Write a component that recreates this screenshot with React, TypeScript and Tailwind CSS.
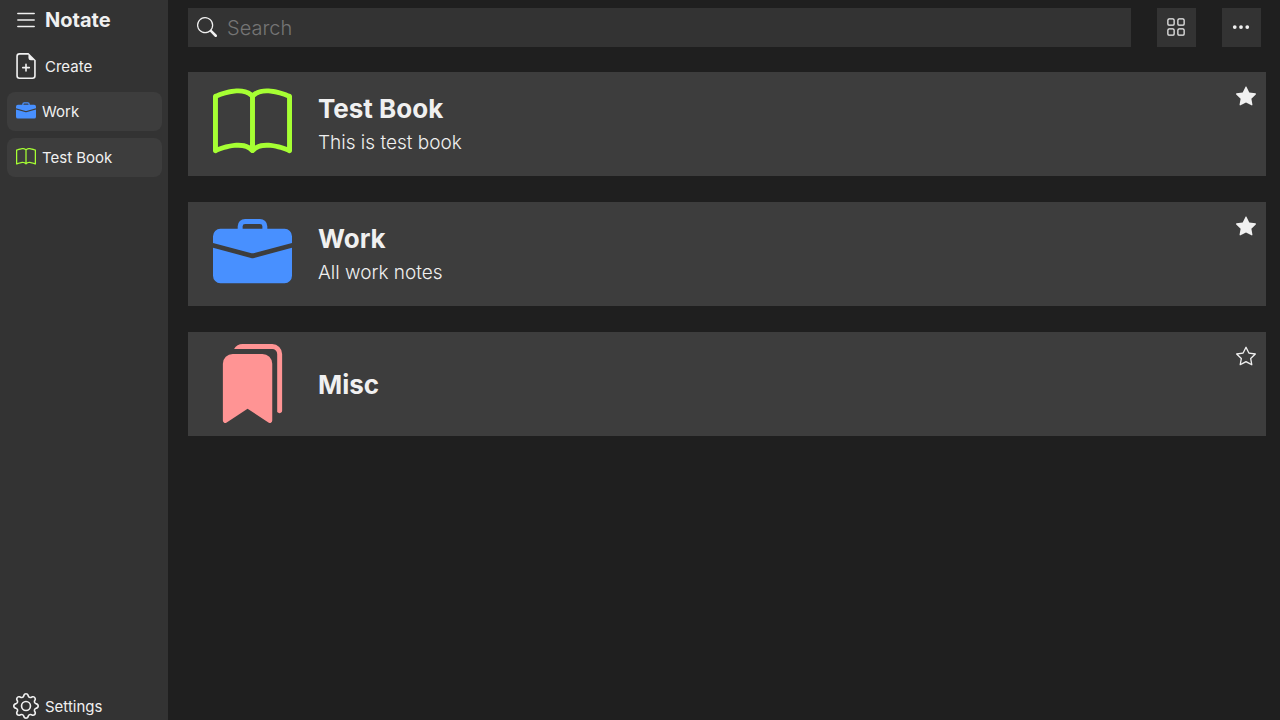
import { useState } from "react";
import type { IconType } from "react-icons";
import {
  BsBook,
  BsBookmarksFill,
  BsBriefcaseFill,
  BsFileEarmarkPlus,
  BsGear,
  BsGrid,
  BsList,
  BsSearch,
  BsStar,
  BsStarFill,
  BsThreeDots,
} from "react-icons/bs";

type Notebook = {
  id: string;
  title: string;
  description?: string;
  icon: IconType;
  color: string;
  starred: boolean;
};

const initialBooks: Notebook[] = [
  { id: "test", title: "Test Book", description: "This is test book", icon: BsBook, color: "text-[#a6ff33]", starred: true },
  { id: "work", title: "Work", description: "All work notes", icon: BsBriefcaseFill, color: "text-[#4890ff]", starred: true },
  { id: "misc", title: "Misc", icon: BsBookmarksFill, color: "text-[#ff9494]", starred: false },
];

function Sidebar({ books }: { books: Notebook[] }) {
  const pinned = books.filter((b) => b.starred).reverse();
  return (
    <aside className="flex w-[168px] shrink-0 flex-col bg-[#333333] text-[15px]">
      <div className="flex h-10 items-center gap-1.5 pl-[13px]">
        <button type="button" aria-label="Toggle menu">
          <BsList className="size-[26px]" />
        </button>
        <h1 className="text-xl font-bold">Notate</h1>
      </div>
      <button type="button" className="flex h-[52px] items-center gap-1.5 pl-[13px]">
        <BsFileEarmarkPlus className="size-[26px]" />
        <span className="pt-0.5">Create</span>
      </button>
      <nav className="flex flex-col gap-[7px] pr-1.5 pl-[7px]">
        {pinned.map(({ id, title, icon: Icon, color }) => (
          <a key={id} href={`#${id}`} className="flex h-[39px] items-center gap-1.5 rounded-lg bg-[#3d3d3d] pl-[9px]">
            <Icon className={`mb-0.5 size-5 ${color}`} />
            <span className="pt-0.5">{title}</span>
          </a>
        ))}
      </nav>
      <button type="button" className="mt-auto flex h-7 items-center gap-1.5 pl-[13px]">
        <BsGear className="size-[26px]" />
        <span className="pt-0.5">Settings</span>
      </button>
    </aside>
  );
}

function BookCard({ book, onToggle }: { book: Notebook; onToggle: () => void }) {
  const Icon = book.icon;
  const Star = book.starred ? BsStarFill : BsStar;
  return (
    <li id={book.id} className="flex h-[104px] bg-[#3d3d3d] pr-[10px] pl-[25px]">
      <Icon className={`mt-3 size-[79px] shrink-0 ${book.color}`} />
      <div className="ml-[26px] flex grow flex-col justify-center gap-1 pt-0.5">
        <h2 className="text-[26px] leading-8 font-bold">{book.title}</h2>
        {book.description && <p className="text-[19px] leading-7 font-light">{book.description}</p>}
      </div>
      <button
        type="button"
        aria-label={`Star ${book.title}`}
        aria-pressed={book.starred}
        onClick={onToggle}
        className="mt-3.5 self-start"
      >
        <Star className="size-5" />
      </button>
    </li>
  );
}

export default function App() {
  const [books, setBooks] = useState(initialBooks);
  const [query, setQuery] = useState("");
  const toggle = (id: string) =>
    setBooks((all) => all.map((b) => (b.id === id ? { ...b, starred: !b.starred } : b)));
  const shown = books.filter((b) => b.title.toLowerCase().includes(query.toLowerCase()));

  return (
    <div className="flex min-h-screen bg-[#1f1f1f] font-['Inter',sans-serif] text-[#f0f0f0]">
      <Sidebar books={books} />
      <main className="flex grow flex-col gap-[25px] pt-2 pr-3.5 pl-5">
        <div className="flex h-[39px] gap-[26px] pr-[5px]">
          <label className="flex grow items-start gap-2.5 bg-[#333333] pl-[9px]">
            <BsSearch className="mt-[9px] size-5 shrink-0" />
            <input
              type="text"
              aria-label="Search"
              placeholder="Search"
              value={query}
              onChange={(e) => setQuery(e.target.value)}
              className="h-full min-w-0 grow bg-transparent text-xl font-light outline-none placeholder:text-[#757575]"
            />
          </label>
          <button type="button" aria-label="Grid view" className="flex w-[39px] items-start bg-[#333333] p-[9px]">
            <BsGrid className="size-5" />
          </button>
          <button type="button" aria-label="More options" className="flex w-[39px] items-start bg-[#333333] p-[9px]">
            <BsThreeDots className="size-5" />
          </button>
        </div>
        <ul className="flex flex-col gap-[26px]">
          {shown.map((book) => (
            <BookCard key={book.id} book={book} onToggle={() => toggle(book.id)} />
          ))}
        </ul>
      </main>
    </div>
  );
}
